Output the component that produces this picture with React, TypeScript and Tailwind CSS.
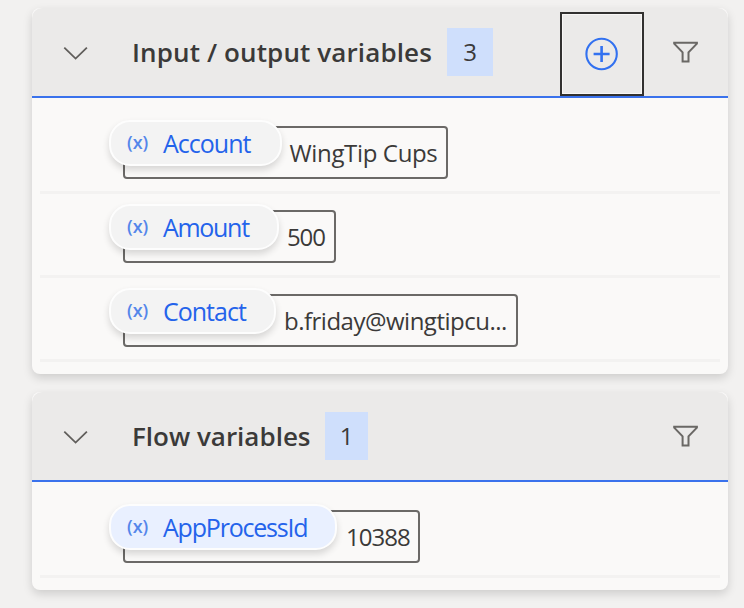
import type { ReactNode } from "react";

type Variable = {
  name: string;
  value: string;
  nameClass: string;
  valueClass: string;
  pillClass: string;
  boxClass: string;
};

const ioVariables: Variable[] = [
  { name: "Account", value: "WingTip Cups", nameClass: "tracking-[-1px]", valueClass: "tracking-[-0.35px] ml-[7.5px]", pillClass: "w-[173px] bg-[#f3f3f3]", boxClass: "w-[325px]" },
  { name: "Amount", value: "500", nameClass: "tracking-[-1.3px]", valueClass: "tracking-[-1.1px] ml-[8px]", pillClass: "w-[170px] bg-[#f3f3f3]", boxClass: "w-[213px]" },
  { name: "Contact", value: "b.friday@wingtipcu...", nameClass: "tracking-[-1px]", valueClass: "tracking-[-0.5px] ml-[8px]", pillClass: "w-[167px] bg-[#f3f3f3]", boxClass: "w-[395px]" },
];

const flowVariables: Variable[] = [
  { name: "AppProcessId", value: "10388", nameClass: "tracking-[-1.2px]", valueClass: "tracking-[-1px] ml-[9px]", pillClass: "w-[228px] bg-[#e9f0ff]", boxClass: "w-[297px]" },
];

function ChevronIcon() {
  return (
    <svg className="mt-px block h-[16px] w-[26px] shrink-0" viewBox="0 0 26 16" fill="none" stroke="#605e5b" strokeWidth="1.8">
      <path d="M1.3 2.6 12.6 13.6 23.9 2.6" />
    </svg>
  );
}

function AddIcon() {
  return (
    <svg className="block h-[34px] w-[34px]" viewBox="0 0 34 34" fill="none" stroke="#3271f0">
      <circle cx="16.6" cy="17" r="15.2" strokeWidth="2.1" />
      <path d="M16.6 9v16M8.6 17h16" strokeWidth="2.6" />
    </svg>
  );
}

function FilterIcon() {
  return (
    <svg className="block h-[24px] w-[26px]" viewBox="0 0 26 24" fill="none" stroke="#6a6865" strokeWidth="2">
      <path d="M1.2 2.8H23.9V3.6L15.5 12.4V21.4H9.6V12.4L1.2 3.6Z" />
    </svg>
  );
}

function VariableRow({ item }: { item: Variable }) {
  return (
    <div className="mx-2 flex h-[84px] items-start border-b-[3px] border-[#f3f2f1] pl-[83px] pt-[16px]">
      <div className={"flex h-[53px] items-start rounded-[4px] border-2 border-[#6b6967] " + item.boxClass}>
        <div
          className={
            "-ml-[16px] -mt-[8px] flex h-[46px] shrink-0 items-center rounded-[21px] border-2 border-[#fdfdfd] pl-[16px] text-[#2463eb] shadow-[0_4px_7px_rgba(0,0,0,0.14)] " +
            item.pillClass
          }
        >
          <span className="w-[36px] shrink-0 pb-[3px] text-[18px] font-semibold leading-[20px] text-[#5486ea]">(x)</span>
          <span className={"whitespace-nowrap text-[25px] font-medium leading-[34px] " + item.nameClass}>{item.name}</span>
        </div>
        <span className={"mt-[8px] whitespace-nowrap text-[24px] leading-[34px] text-[#3b3a39] " + item.valueClass}>{item.value}</span>
      </div>
    </div>
  );
}

function Panel({
  title,
  titleClass,
  count,
  countClass,
  variables,
  action,
}: {
  title: string;
  titleClass: string;
  count: number;
  countClass: string;
  variables: Variable[];
  action?: ReactNode;
}) {
  return (
    <section className="rounded-[8px] bg-[#faf9f8] shadow-[0_4px_10px_rgba(0,0,0,0.15)]">
      <header className="flex h-[90px] items-center rounded-t-[10px] border-b-2 border-[#3a72ec] bg-[#ebeae9] pl-[31px]">
        <ChevronIcon />
        <h2 className={"ml-[43px] shrink-0 whitespace-nowrap text-[26px] font-semibold leading-[36px] text-[#3b3a39] " + titleClass}>{title}</h2>
        <span className={"flex h-[48px] shrink-0 items-center justify-center bg-[#cfdffc] text-[24px] font-medium text-[#3b3a39] " + countClass}>{count}</span>
        <div className="ml-auto flex items-center pr-[29px]">
          {action}
          <FilterIcon />
        </div>
      </header>
      <div className="pb-[12px] pt-[12px]">
        {variables.map((item) => (
          <VariableRow key={item.name} item={item} />
        ))}
      </div>
    </section>
  );
}

export default function App() {
  return (
    <main className="flex h-[608px] w-[744px] flex-col gap-[18px] overflow-hidden bg-[#f2f1f0] pl-8 pr-4 pt-2 font-['Open_Sans','Noto_Sans',sans-serif]">
      <Panel
        title="Input / output variables"
        titleClass="w-[315px] tracking-[0.12px]"
        count={3}
        countClass="w-[46px]"
        variables={ioVariables}
        action={
          <div className="mr-[29px] mt-[4px] flex h-[84px] w-[84px] items-center justify-center border-2 border-[#323130] shadow-[inset_0_0_0_1px_#f8f7f6]">
            <AddIcon />
          </div>
        }
      />
      <Panel
        title="Flow variables"
        titleClass="w-[193px]"
        count={1}
        countClass="w-[43px]"
        variables={flowVariables}
      />
    </main>
  );
}
